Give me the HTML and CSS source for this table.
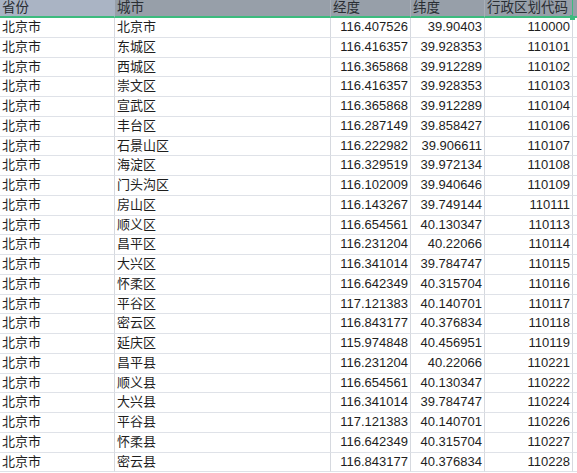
FILE: index.html
```html
<!DOCTYPE html>
<html lang="zh-CN">
<head>
<meta charset="utf-8">
<link rel="stylesheet" href="styles.css">
</head>
<body>
<div class="sheet">
  <div class="hd hd-first">省份</div>
  <div class="hd">城市</div>
  <div class="hd">经度</div>
  <div class="hd">纬度</div>
  <div class="hd hd-last">行政区划代码<span class="handle"></span></div>
  <div class="hd hd-extra"></div>
</div>
<div class="sheet body" id="rows"></div>
<script src="app.js"></script>
</body>
</html>
```

FILE: app.js
```js
const data = [
["北京市","116.407526","39.90403","110000"],
["东城区","116.416357","39.928353","110101"],
["西城区","116.365868","39.912289","110102"],
["崇文区","116.416357","39.928353","110103"],
["宣武区","116.365868","39.912289","110104"],
["丰台区","116.287149","39.858427","110106"],
["石景山区","116.222982","39.906611","110107"],
["海淀区","116.329519","39.972134","110108"],
["门头沟区","116.102009","39.940646","110109"],
["房山区","116.143267","39.749144","110111"],
["顺义区","116.654561","40.130347","110113"],
["昌平区","116.231204","40.22066","110114"],
["大兴区","116.341014","39.784747","110115"],
["怀柔区","116.642349","40.315704","110116"],
["平谷区","117.121383","40.140701","110117"],
["密云区","116.843177","40.376834","110118"],
["延庆区","115.974848","40.456951","110119"],
["昌平县","116.231204","40.22066","110221"],
["顺义县","116.654561","40.130347","110222"],
["大兴县","116.341014","39.784747","110224"],
["平谷县","117.121383","40.140701","110226"],
["怀柔县","116.642349","40.315704","110227"],
["密云县","116.843177","40.376834","110228"]
];
const root = document.getElementById("rows");
for (const r of data) {
  const cells = [["北京市",""],[r[0],""],[r[1],"num"],[r[2],"num"],[r[3],"num"],["","extra"]];
  for (const [t,c] of cells) {
    const d = document.createElement("div");
    d.className = "cell " + c;
    d.textContent = t;
    root.appendChild(d);
  }
}
```

FILE: styles.css
```css
html, body {
  margin: 0;
  padding: 0;
  background: #ffffff;
}
body {
  font-family: "Liberation Sans", "Noto Sans CJK SC", sans-serif;
  font-size: 13px;
  color: #1e1e1e;
  overflow: hidden;
}
.sheet {
  display: grid;
  grid-template-columns: 115px 216px 80px 74px 88px 1fr;
}
.hd {
  box-sizing: border-box;
  height: 18px;
  line-height: 16px;
  font-size: 13.5px;
  background: #979fa9;
  color: #2a2e33;
  border-right: 1px solid #a9afb7;
  border-bottom: 2px solid #3dbb7e;
  padding: 0 2px;
  white-space: nowrap;
  position: relative;
}
.hd-first {
  background: #aab4c4;
  border-right-color: #aab4c4;
}
.hd-last {
  border-right: 1px solid #3dbb7e;
}
.hd-extra {
  background: #979fa9;
  border-right: none;
}
.handle {
  position: absolute;
  right: -3px;
  bottom: -4px;
  width: 5px;
  height: 5px;
  background: #3dbb7e;
}
.num {
  text-align: right;
}
.body {
  grid-auto-rows: 19.75px;
}
.cell {
  box-sizing: border-box;
  border-right: 1px solid #d6d9df;
  border-bottom: 1px solid #dfe2e8;
  line-height: 18.75px;
  padding: 0 2px 0 2px;
  white-space: nowrap;
  overflow: hidden;
}
.cell.extra {
  border-right: none;
}
```
